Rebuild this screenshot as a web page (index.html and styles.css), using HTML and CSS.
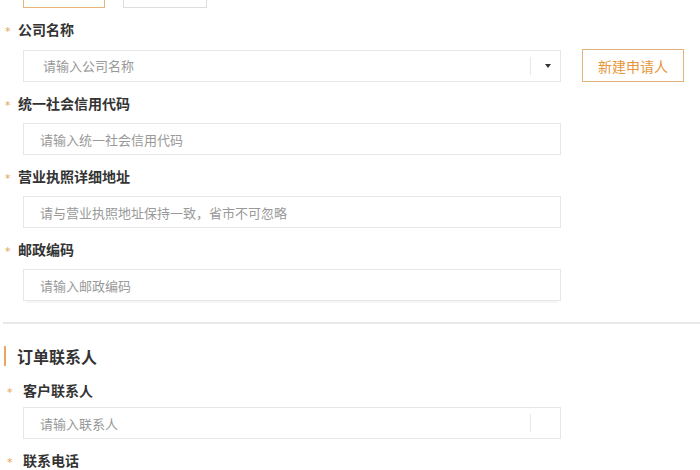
FILE: index.html
```html
<!DOCTYPE html>
<html lang="zh-CN">
<head>
<meta charset="utf-8">
<title>申请人信息</title>
<link rel="stylesheet" href="styles.css">
</head>
<body>
<div class="page">
  <div class="tabs">
    <div class="tab tab-active"></div>
    <div class="tab"></div>
  </div>

  <div class="field">
    <div class="label"><span class="star">*</span>公司名称</div>
    <div class="row">
      <div class="input select"><span class="ph ph-select">请输入公司名称</span><span class="sep"></span><span class="caret"></span></div>
      <button class="btn">新建申请人</button>
    </div>
  </div>

  <div class="field">
    <div class="label"><span class="star">*</span>统一社会信用代码</div>
    <div class="input"><span class="ph">请输入统一社会信用代码</span></div>
  </div>

  <div class="field">
    <div class="label"><span class="star">*</span>营业执照详细地址</div>
    <div class="input"><span class="ph">请与营业执照地址保持一致，省市不可忽略</span></div>
  </div>

  <div class="field">
    <div class="label"><span class="star">*</span>邮政编码</div>
    <div class="input input-shadow"><span class="ph">请输入邮政编码</span></div>
  </div>

  <div class="divider"></div>

  <div class="section-title">订单联系人</div>

  <div class="field field-contact">
    <div class="label"><span class="star">*</span>客户联系人</div>
    <div class="input select"><span class="ph">请输入联系人</span><span class="sep"></span></div>
  </div>

  <div class="field field-contact">
    <div class="label"><span class="star">*</span>联系电话</div>
  </div>
</div>
</body>
</html>
```

FILE: styles.css
```css
html, body {
  margin: 0;
  padding: 0;
  background: #ffffff;
}

body {
  font-family: "Noto Sans CJK SC", "Noto Sans", sans-serif;
  color: #333333;
  overflow: hidden;
}

.page {
  display: flex;
  flex-direction: column;
  width: 700px;
}

.tabs {
  display: flex;
  gap: 18px;
  padding-left: 23px;
  margin-top: -22px;
  margin-bottom: 11px;
}

.tab {
  width: 82px;
  height: 30px;
  box-sizing: border-box;
  border: 1px solid #dddddd;
  background: #ffffff;
}

.tab-active {
  border-color: #e6b577;
}

.tab + .tab {
  width: 84px;
}

.field {
  display: flex;
  flex-direction: column;
  margin-bottom: 11px;
}

.label {
  display: flex;
  align-items: center;
  height: 20px;
  padding-left: 5px;
  font-size: 14px;
  font-weight: 700;
  color: #333333;
  margin-bottom: 10px;
}

.star {
  display: inline-block;
  width: 13px;
  font-family: "DejaVu Sans", sans-serif;
  font-size: 11px;
  font-weight: 400;
  color: #e3a456;
  line-height: 20px;
  position: relative;
  top: 3px;
}

.row {
  display: flex;
  align-items: center;
}

.input {
  position: relative;
  display: flex;
  align-items: center;
  width: 538px;
  height: 32px;
  margin-left: 23px;
  box-sizing: border-box;
  border: 1px solid #e6e6e6;
  background: #ffffff;
  padding-left: 16px;
}

.input-shadow {
  box-shadow: 0 5px 0 -3px #f6f6f6;
}

.ph {
  font-size: 13px;
  color: #999999;
}

.ph-select {
  padding-left: 3px;
}

.sep {
  position: absolute;
  left: 506px;
  top: 6px;
  width: 1px;
  height: 18px;
  background: #e8e8e8;
}

.caret {
  position: absolute;
  left: 521px;
  top: 13px;
  width: 0;
  height: 0;
  border-left: 3.5px solid transparent;
  border-right: 3.5px solid transparent;
  border-top: 4px solid #333333;
}

.btn {
  margin-left: 21px;
  width: 102px;
  height: 33px;
  box-sizing: border-box;
  border: 1px solid #e2b47a;
  background: #ffffff;
  color: #e6963a;
  font-family: "Noto Sans CJK SC", "Noto Sans", sans-serif;
  font-size: 14px;
  padding: 0;
}

.divider {
  height: 2px;
  margin-left: 3px;
  margin-top: 10px;
  background: #e8e8e8;
}

.section-title {
  display: flex;
  align-items: center;
  height: 20px;
  margin-top: 22px;
  margin-bottom: 14px;
  padding-left: 4px;
  font-size: 16px;
  font-weight: 700;
  color: #333333;
}

.section-title::before {
  content: "";
  display: block;
  width: 2px;
  height: 20px;
  background: #e8a860;
  margin-right: 11px;
}

.field-contact .label {
  padding-left: 7px;
  margin-bottom: 7px;
}

.field-contact .star {
  width: 16px;
}
```
